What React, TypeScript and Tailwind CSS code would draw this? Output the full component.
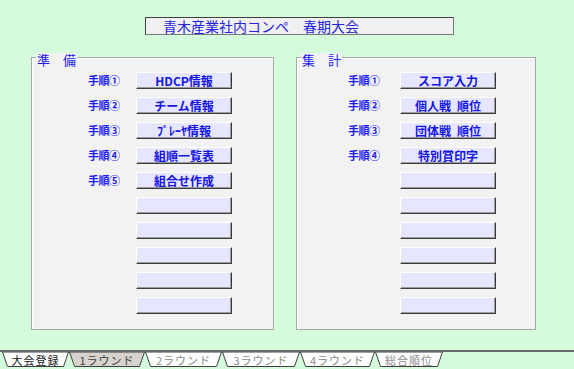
import React from 'react';

type Row = { step?: string; label?: string };

const PREP: Row[] = [
  { step: '手順①', label: 'HDCP情報' },
  { step: '手順②', label: 'チーム情報' },
  { step: '手順③', label: 'ﾌﾟﾚｰﾔ情報' },
  { step: '手順④', label: '組順一覧表' },
  { step: '手順⑤', label: '組合せ作成' },
  {}, {}, {}, {}, {},
];

const TOTAL: Row[] = [
  { step: '手順①', label: 'スコア入力' },
  { step: '手順②', label: '個人戦\u2002順位' },
  { step: '手順③', label: '団体戦\u2002順位' },
  { step: '手順④', label: '特別賞印字' },
  {}, {}, {}, {}, {}, {},
];

const TABS = [
  { name: '大会登録', w: 67, tone: 'text-[#202020]', fill: '#ffffff' },
  { name: '1ラウンド', w: 76, tone: 'text-[#404040]', fill: '#d6d3ce' },
  { name: '2ラウンド', w: 77, tone: 'text-[#8a8a8a]', fill: '#ffffff' },
  { name: '3ラウンド', w: 78, tone: 'text-[#8a8a8a]', fill: '#ffffff' },
  { name: '4ラウンド', w: 75, tone: 'text-[#8a8a8a]', fill: '#ffffff' },
  { name: '総合順位', w: 68, tone: 'text-[#8a8a8a]', fill: '#ffffff' },
];

const Panel: React.FC<{
  title: string;
  rows: Row[];
  width: string;
  pad: string;
  gap: string;
}> = ({ title, rows, width, pad, gap }) => (
  <div
    className={`relative h-[273px] ${width} border border-[#a8a8a8] bg-[#f2f2f2] shadow-[inset_1px_1px_0_#ffffff]`}
  >
    {/* group caption sitting on the frame */}
    <span className="absolute left-[4px] top-[-5px] bg-[#f2f2f2] pl-[1px] pr-[1px] text-[13px] leading-none text-[#1c1cf0]">
      {title}
    </span>
    <div className={`flex flex-col gap-[8px] pt-[14px] ${pad}`}>
      {rows.map((r, i) => (
        <div key={i} className="flex h-[17px] items-center">
          <span className="w-[34px] whitespace-nowrap text-[11px] font-bold leading-none tracking-[-0.5px] text-[#1c1cf0]">
            {r.step ?? ''}
          </span>
          <div
            className={`${gap} flex h-[17px] w-[96px] items-center justify-center border border-t-white border-l-white border-r-[#3c3c3c] border-b-[#3c3c3c] bg-[#e6e6ff] shadow-[inset_-1px_-1px_0_#9c9c9c] text-[12px] font-semibold leading-none text-[#1414e6]`}
          >
            {r.label ?? ''}
          </div>
        </div>
      ))}
    </div>
  </div>
);

const Tab: React.FC<{ name: string; w: number; tone: string; fill: string }> = ({ name, w, tone, fill }) => (
  <div className="relative flex h-[15px] items-center justify-center" style={{ width: w }}>
    <svg className="absolute inset-0" width={w} height={15} viewBox={`0 0 ${w} 15`}>
      <polygon
        points={`0.5,0 5.5,14.5 ${w - 5.5},14.5 ${w - 0.5},0`}
        fill={fill}
        stroke="#404040"
        strokeWidth="1"
      />
    </svg>
    <span className={`relative pt-[1px] text-[11px] leading-none tracking-[1px] ${tone}`}>{name}</span>
  </div>
);

export default function App() {
  return (
    <div className="flex h-[369px] w-[574px] flex-col overflow-hidden bg-[#d4fcdc] font-['Noto_Sans_CJK_JP',sans-serif]">
      <div className="ml-[145px] mt-[17px] flex h-[18px] w-[309px] items-center border border-t-[#404040] border-l-[#404040] border-r-[#7a7a7a] border-b-[#7a7a7a] bg-[#f0f0f0] pl-[17px] text-[14px] leading-none text-[#2424dc]">
        青木産業社内コンペ　春期大会
      </div>

      <div className="ml-[31px] mt-[22px] flex gap-[22px]">
        <Panel title="準　備" rows={PREP} width="w-[243px]" pad="pl-[56px]" gap="ml-[14px]" />
        <Panel title="集　計" rows={TOTAL} width="w-[240px]" pad="pl-[51px]" gap="ml-[18px]" />
      </div>

      <div className="mt-[20px] border-t-2 border-[#6a6a6a]">
        <div className="flex pl-[2px]">
          {TABS.map((t) => (
            <Tab key={t.name} {...t} />
          ))}
        </div>
      </div>
    </div>
  );
}
